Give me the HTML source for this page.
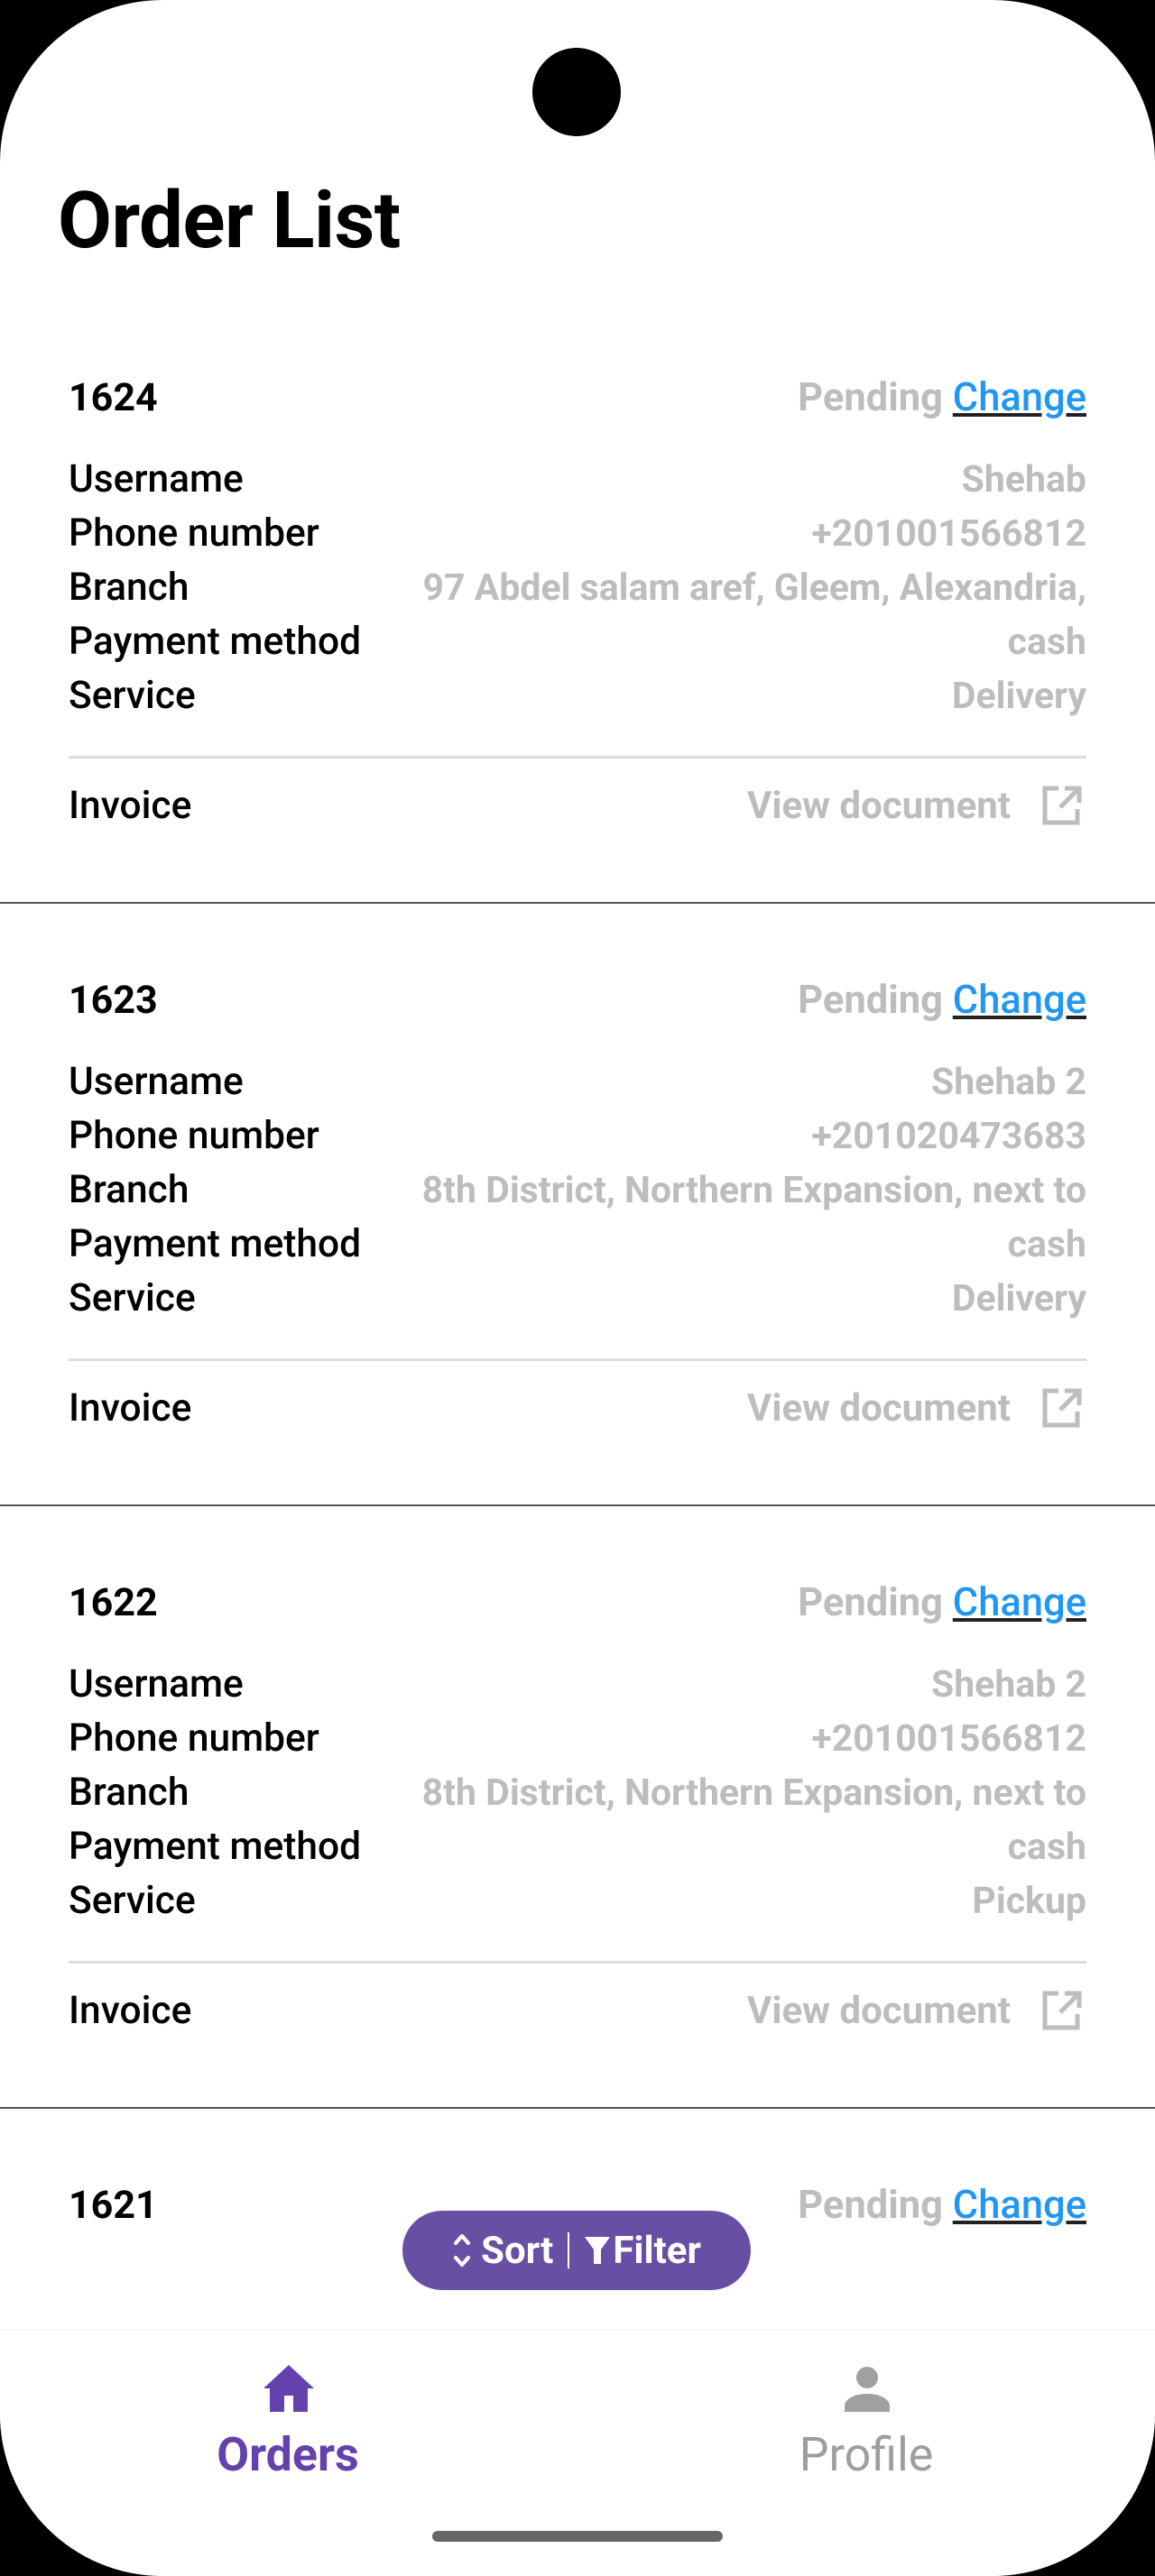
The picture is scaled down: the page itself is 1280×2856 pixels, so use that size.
<!DOCTYPE html>
<html><head><meta charset="utf-8"><style>
*{margin:0;padding:0;box-sizing:border-box}
html,body{width:1280px;height:2856px;background:#000;overflow:hidden;font-family:"Roboto","Liberation Sans",sans-serif}
.screen{position:absolute;left:0;top:0;width:1280px;height:2856px;background:#fff;border-radius:180px;overflow:hidden}
.cam{position:absolute;left:590px;top:53px;width:98px;height:98px;border-radius:50%;background:#000}
h1{position:absolute;left:64px;top:202px;font-size:87px;font-weight:bold;letter-spacing:-0.5px;color:#000;line-height:1}
.card{position:absolute;left:0;width:1280px;height:668px}
.t{position:absolute;font-size:41px;line-height:46px;white-space:nowrap}
.l{left:76px;color:#000;font-weight:500;font-size:42.5px}
.r{right:76px;color:#bdbdbd;font-weight:bold;text-align:right}
.st{font-size:43.5px}
.vd{font-size:42px}
.id{left:76px;font-weight:bold;color:#000;font-size:43px}
.ch{color:#2196f3;text-decoration:underline;text-decoration-color:#222;font-weight:500}
.div{position:absolute;left:76px;width:1128px;height:3px;background:#ddd}
.sep{position:absolute;left:0;width:1280px;height:2px;background:#555}
.pill{position:absolute;left:446px;top:2451px;width:386px;height:88px;border-radius:44px;background:#6750a4;color:#fff;font-size:42px;font-weight:bold;display:flex;align-items:center;justify-content:center;gap:10px}
.nav{position:absolute;left:0;top:2582px;width:1280px;height:274px;background:#fff;border-top:2px solid #f7f7f7}
.lab{position:absolute;font-size:52px;line-height:58px;transform:translateX(-50%);white-space:nowrap}
.home{position:absolute;left:479px;top:2806px;width:322px;height:12px;border-radius:6px;background:#666}
</style></head><body>
<div class="screen">
<div class="cam"></div>
<h1>Order List</h1>

<div class="card" style="top:418px">
 <div class="t id" style="top:0">1624</div>
 <div class="t r st" style="top:0">Pending <span class="ch">Change</span></div>
 <div class="t l" style="top:91px">Username</div><div class="t r" style="top:91px">Shehab</div>
 <div class="t l" style="top:151px">Phone number</div><div class="t r" style="top:151px">+201001566812</div>
 <div class="t l" style="top:211px">Branch</div><div class="t r" style="top:211px">97 Abdel salam aref, Gleem, Alexandria,</div>
 <div class="t l" style="top:271px">Payment method</div><div class="t r" style="top:271px">cash</div>
 <div class="t l" style="top:331px">Service</div><div class="t r" style="top:331px">Delivery</div>
 <div class="div" style="top:420px"></div>
 <div class="t l" style="top:453px">Invoice</div><div class="t r vd" style="top:453px;right:160px">View document</div>
 <svg style="position:absolute;left:1153px;top:453px" width="46" height="46" viewBox="0 0 46 46" fill="none" stroke="#bdbdbd" stroke-width="5"><path d="M20 3H5v38h36V26"/><path d="M27 3h16v16M43 3L22 24"/></svg>
 <div class="sep" style="top:582px"></div>
</div>

<div class="card" style="top:1086px">
 <div class="t id" style="top:0">1623</div>
 <div class="t r st" style="top:0">Pending <span class="ch">Change</span></div>
 <div class="t l" style="top:91px">Username</div><div class="t r" style="top:91px">Shehab 2</div>
 <div class="t l" style="top:151px">Phone number</div><div class="t r" style="top:151px">+201020473683</div>
 <div class="t l" style="top:211px">Branch</div><div class="t r" style="top:211px">8th District, Northern Expansion, next to</div>
 <div class="t l" style="top:271px">Payment method</div><div class="t r" style="top:271px">cash</div>
 <div class="t l" style="top:331px">Service</div><div class="t r" style="top:331px">Delivery</div>
 <div class="div" style="top:420px"></div>
 <div class="t l" style="top:453px">Invoice</div><div class="t r vd" style="top:453px;right:160px">View document</div>
 <svg style="position:absolute;left:1153px;top:453px" width="46" height="46" viewBox="0 0 46 46" fill="none" stroke="#bdbdbd" stroke-width="5"><path d="M20 3H5v38h36V26"/><path d="M27 3h16v16M43 3L22 24"/></svg>
 <div class="sep" style="top:582px"></div>
</div>

<div class="card" style="top:1754px">
 <div class="t id" style="top:0">1622</div>
 <div class="t r st" style="top:0">Pending <span class="ch">Change</span></div>
 <div class="t l" style="top:91px">Username</div><div class="t r" style="top:91px">Shehab 2</div>
 <div class="t l" style="top:151px">Phone number</div><div class="t r" style="top:151px">+201001566812</div>
 <div class="t l" style="top:211px">Branch</div><div class="t r" style="top:211px">8th District, Northern Expansion, next to</div>
 <div class="t l" style="top:271px">Payment method</div><div class="t r" style="top:271px">cash</div>
 <div class="t l" style="top:331px">Service</div><div class="t r" style="top:331px">Pickup</div>
 <div class="div" style="top:420px"></div>
 <div class="t l" style="top:453px">Invoice</div><div class="t r vd" style="top:453px;right:160px">View document</div>
 <svg style="position:absolute;left:1153px;top:453px" width="46" height="46" viewBox="0 0 46 46" fill="none" stroke="#bdbdbd" stroke-width="5"><path d="M20 3H5v38h36V26"/><path d="M27 3h16v16M43 3L22 24"/></svg>
 <div class="sep" style="top:582px"></div>
</div>

<div class="card" style="top:2422px;height:160px">
 <div class="t id" style="top:0">1621</div>
 <div class="t r st" style="top:0">Pending <span class="ch">Change</span></div>
</div>

<div class="pill">
 <svg width="22" height="44" viewBox="0 0 22 44" fill="none" stroke="#fff" stroke-width="4" stroke-linecap="round" stroke-linejoin="round"><path d="M4 14L11 6l7 8M4 30l7 8 7-8"/></svg>
 <span>Sort</span>
 <span style="width:2px;height:40px;background:#fff;margin:0 6px"></span>
 <svg width="30" height="32" viewBox="0 0 30 32"><path d="M1 1h28L19 15v16h-8V15z" fill="#fff"/></svg><span style="margin-left:-8px">Filter</span>
</div>

<div class="nav">
 <svg style="position:absolute;left:292px;top:38px" width="56" height="52" viewBox="0 0 56 52"><path d="M28 0L0 26h7v26h16V34h10v18h16V26h7z" fill="#6441ad"/></svg>
 <div class="lab" style="left:319px;top:109px;color:#6441ad;font-weight:bold">Orders</div>
 <svg style="position:absolute;left:936px;top:40px" width="50" height="50" viewBox="0 0 50 50" fill="#a0a0a0"><circle cx="25" cy="12" r="12"/><path d="M0 50v-6c0-9 12-14 25-14s25 5 25 14v6z"/></svg>
 <div class="lab" style="left:960px;top:109px;color:#9e9e9e">Profile</div>
</div>
<div class="home"></div>
</div>
</body></html>
